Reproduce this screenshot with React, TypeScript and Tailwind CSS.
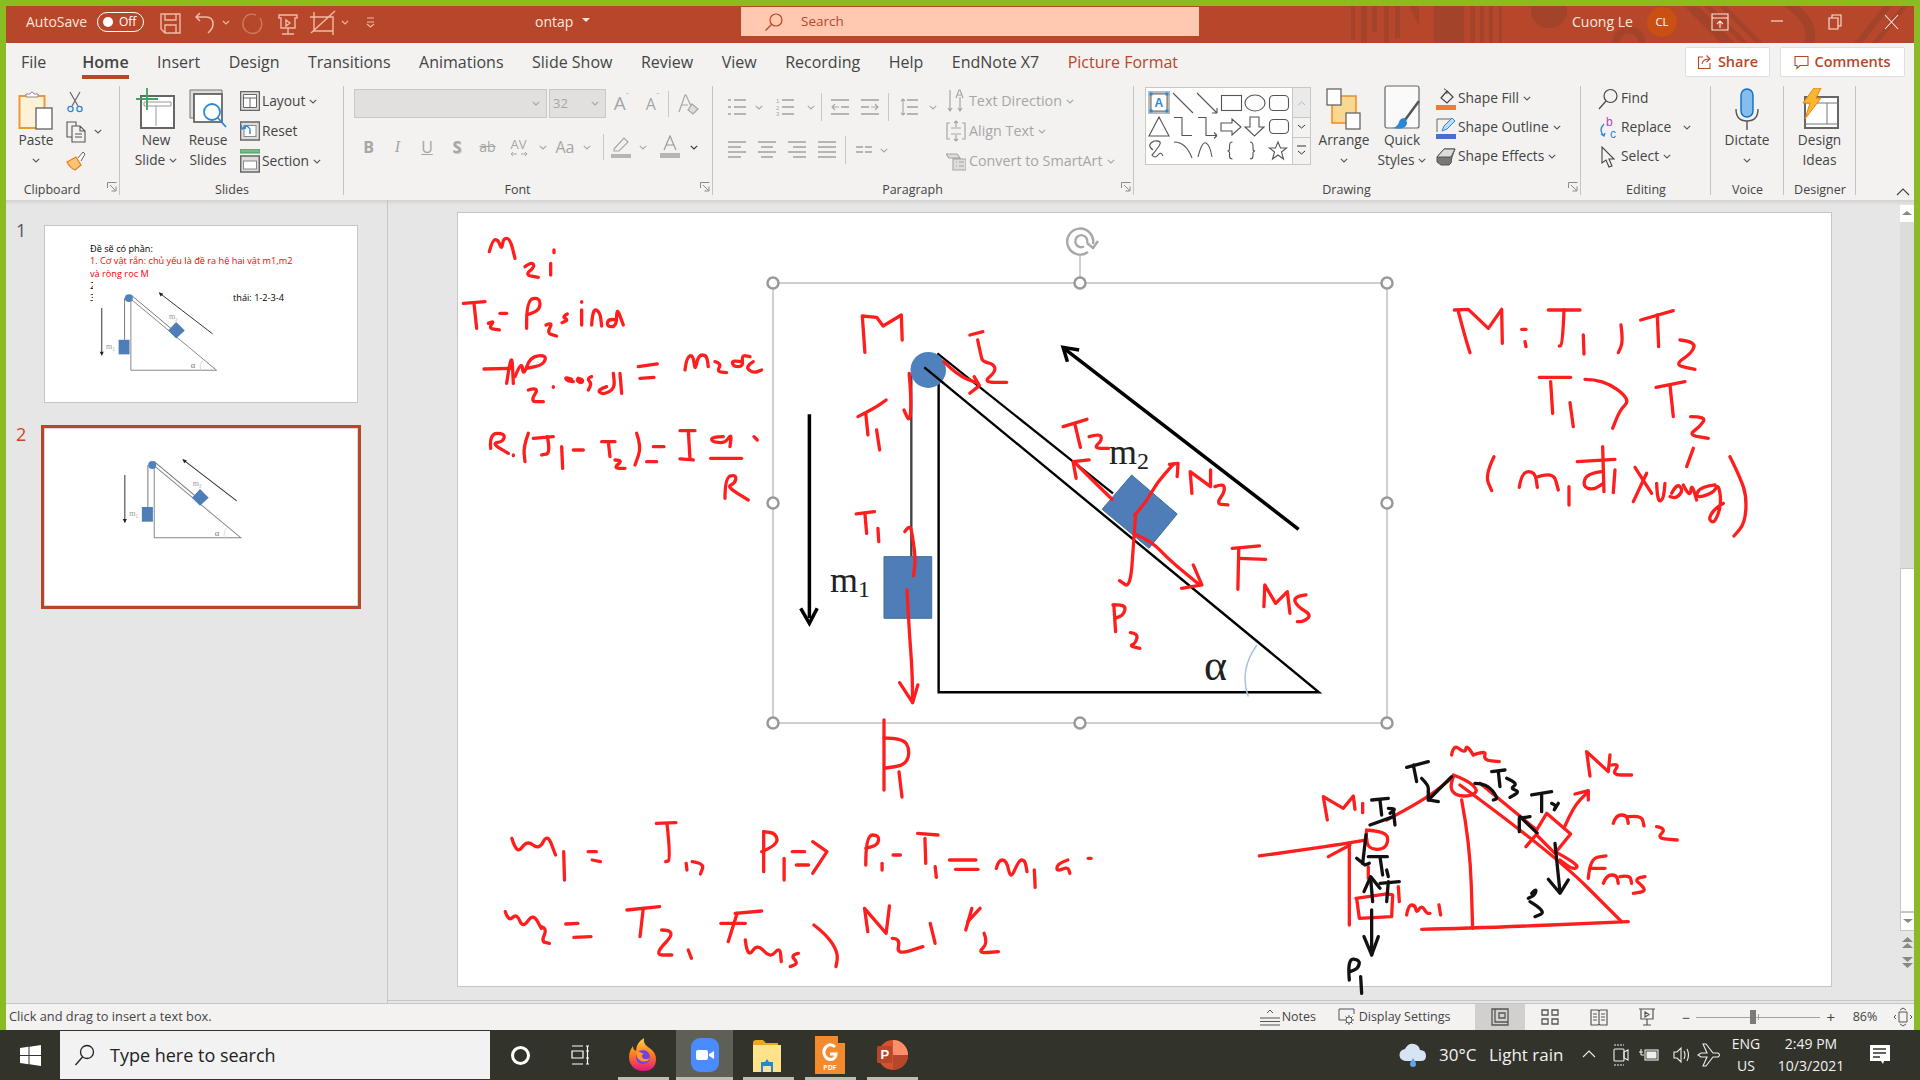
import React from "react";

const RED = "#ff1e1e";

function smooth(s: string) {
  const straight = s.startsWith("!");
  const p = s.replace("!", "").trim().split(/\s+/).map((a) => a.split(",").map(Number));
  if (straight || p.length < 3) return "M" + p.map((q) => q[0] + " " + q[1]).join(" L");
  let d = `M${p[0][0]} ${p[0][1]}`;
  for (let i = 1; i < p.length - 1; i++) {
    const mx = (p[i][0] + p[i + 1][0]) / 2;
    const my = (p[i][1] + p[i + 1][1]) / 2;
    d += ` Q${p[i][0]} ${p[i][1]} ${mx} ${my}`;
  }
  const l = p[p.length - 1];
  return d + ` L${l[0]} ${l[1]}`;
}

function Ink({ x = 0, y = 0, sx = 1, sy = 1, color = RED, w = 3.3, d }: { x?: number; y?: number; sx?: number; sy?: number; color?: string; w?: number; d: string[] }) {
  return (
    <g transform={`translate(${x} ${y}) scale(${sx} ${sy})`} fill="none" stroke={color} strokeWidth={w} strokeLinecap="round" strokeLinejoin="round">
      {d.map((s, i) => (
        <path key={i} d={smooth(s)} vectorEffect="non-scaling-stroke" />
      ))}
    </g>
  );
}

function Chev({ c = "#555", className = "" }: { c?: string; className?: string }) {
  return (
    <svg width="8" height="5" viewBox="0 0 8 5" fill="none" className={"shrink-0 " + className}>
      <path d="M.8.8 4 4l3.2-3.2" stroke={c} strokeWidth="1.1" />
    </svg>
  );
}

function Launcher() {
  return (
    <svg width="10" height="10" viewBox="0 0 10 10" fill="none" className="absolute right-[3px] bottom-[6px]">
      <path d="M.5 6V.5H9.5M3 3l5.5 5.5M4.5 9H9V4.5" stroke="#8a8a8a" />
    </svg>
  );
}

function Group({ w, label, launcher, children }: { w: string; label: string; launcher?: boolean; children: React.ReactNode }) {
  return (
    <div className={"relative shrink-0 h-[112px] flex flex-col " + w}>
      <div className="h-[95px] flex">{children}</div>
      <div className={"text-center text-[12.5px] leading-[17px] text-[#444] " + (launcher ? "pr-[22px]" : "")}>{label}</div>
      {launcher && <Launcher />}
      <div className="absolute right-0 top-0 bottom-[3px] w-px bg-[#c4c4c4]" />
    </div>
  );
}

function Big({ w, icon, l1, l2, chev }: { w: string; icon: React.ReactNode; l1: string; l2?: string; chev?: boolean }) {
  return (
    <div className={"flex flex-col items-center shrink-0 text-[13.7px] leading-[20px] text-[#444] whitespace-nowrap " + w}>
      <div className="h-[44px] flex items-end justify-center">{icon}</div>
      <div>{l1}</div>
      <div className="flex items-center gap-[4px] h-[20px]">
        {l2}
        {chev && <Chev />}
      </div>
    </div>
  );
}

function Small({ icon, text, chev, dis, h = "h-[30px]", iw = "w-[24px]" }: { icon: React.ReactNode; text: string; chev?: boolean; dis?: boolean; h?: string; iw?: string }) {
  return (
    <div className={"flex items-center whitespace-nowrap " + h + " " + (dis ? "text-[#a6a6a6] text-[14.3px]" : "text-[#444] text-[13.8px]")}>
      <div className={"flex justify-center shrink-0 " + iw}>{icon}</div>
      <span>{text}</span>
      {chev && <Chev c={dis ? "#a6a6a6" : "#555"} className="ml-[4px]" />}
    </div>
  );
}

function Lines({ rows, w = 18, c = "#a6a6a6", extra }: { rows: number[][]; w?: number; c?: string; extra?: React.ReactNode }) {
  return (
    <svg width={w} height="18" viewBox={`0 0 ${w} 18`} fill="none" stroke={c} strokeWidth="1.6">
      {rows.map((r, i) => (
        <path key={i} d={`M${r[0]} ${r[2]}H${r[1]}`} />
      ))}
      {extra}
    </svg>
  );
}

function MiniDiagram({ dx, dy }: { dx: number; dy: number }) {
  return (
    <svg viewBox="133 670 940 532" className="absolute inset-0 w-full h-full">
      <g transform={`translate(${dx} ${dy})`}>
        <path d="M463 778V998H722L457 778" fill="none" stroke="#888" strokeWidth="3" />
        <path d="M463 770L600 885M444 780V906" fill="none" stroke="#777" strokeWidth="3" />
        <circle cx="457" cy="780" r="12" fill="#4f81bd" />
        <rect x="426" y="906" width="33" height="44" fill="#4f7db8" />
        <path d="M600 852L626 878 600 902 576 878Z" fill="#4f7db8" />
        <path d="M375 810V950M710 888L550 765" stroke="#333" strokeWidth="3" fill="none" />
        <path d="M369 942L375 955 381 942ZM547 762L561 767 553 775Z" fill="#222" />
        <path d="M680 968Q668 985 674 1000" stroke="#bcd" strokeWidth="2" fill="none" />
        <text x="388" y="934" fontFamily="Liberation Serif" fontSize="24" fill="#999">m₁</text>
        <text x="578" y="844" fontFamily="Liberation Serif" fontSize="24" fill="#999">m₂</text>
        <text x="644" y="992" fontFamily="Liberation Serif" fontSize="26" fill="#777">α</text>
      </g>
    </svg>
  );
}

function Tray({ w, children }: { w: string; children: React.ReactNode }) {
  return <div className={"flex justify-center shrink-0 " + w}>{children}</div>;
}

export default function App() {
  return (
    <div className="w-[1920px] h-[1080px] overflow-hidden flex flex-col bg-[#32332a] [font-family:'Open_Sans','Noto_Sans',sans-serif]">
      <div className="h-[1030px] shrink-0 flex flex-col border-t-[6px] border-x-[6px] border-[#8abb22]">
        {/* TITLE BAR */}
        <div className="relative h-[37px] shrink-0 bg-[#b7472a] flex items-center pb-[6px] text-white overflow-hidden">
          <svg viewBox="1340 6 570 37" className="absolute right-0 top-0 w-[570px] h-[37px]">
            <g fill="#a3432a">
              <rect x="1347" y="6" width="4" height="34" />
              <rect x="1357" y="6" width="6" height="37" />
              <rect x="1368" y="6" width="5" height="26" />
              <rect x="1380" y="6" width="5" height="37" />
              <rect x="1391" y="6" width="5" height="32" />
              <path d="M1405 6h10v20zM1430 6h30v37h-30z" />
              <rect x="1466" y="6" width="5" height="37" />
              <rect x="1476" y="6" width="4" height="37" />
              <rect x="1485" y="6" width="4" height="37" />
              <rect x="1495" y="6" width="3" height="37" />
              <circle cx="1545" cy="10" r="18" />
              <circle cx="1625" cy="43" r="13" fill="none" stroke="#a3432a" strokeWidth="7" />
              <path d="M1680 6l37 37h14l-37-37zM1700 6l37 37h7l-37-37zM1715 6l37 37h7l-37-37z" />
              <path d="M1780 6q28 20 20 37h10q6-20-16-37zM1850 43l30-37h8l-30 37zM1868 43l30-37h6l-30 37z" />
            </g>
          </svg>
          <span className="ml-[20px] w-[71px] shrink-0 text-[14px] text-[#ffe6dc] whitespace-nowrap">AutoSave</span>
          <div className="relative w-[47px] shrink-0 h-[20px] rounded-full border border-white flex items-center pl-[5px] gap-[6px] text-[12px]">
            <span className="w-[10px] h-[10px] rounded-full bg-white" />
            <span>Off</span>
          </div>
          <svg width="232" height="26" viewBox="150 8 232 26" fill="none" stroke="#f3b9a4" strokeWidth="1.4" className="ml-[6px] shrink-0">
            <path d="M161 13h19v19h-15l-4-4zM165 13v6h11v-6M165 32v-8h11v8" />
            <path d="M200 20l-4-4 4-4M196 16h10q7 0 7 7 0 5-5 9" strokeWidth="1.5" />
            <path d="M223 20l3 3 3-3" strokeWidth="1.1" />
            <path d="M256 14q-8-3-12 4-3 7 2 12 7 5 13 0 5-6 1-13" stroke="#cf7a60" />
            <path d="M279 14h18v3h-2v10h-14V17h-2zM288 27v6M282 33h12M286 19l4 3-4 3z" />
            <path d="M314 11v19h19M320 16h-10M333 34V16h-13M311 32l24-22" />
            <path d="M342 20l3 3 3-3" strokeWidth="1.1" />
            <path d="M367 17h7M367 23l3.500 3 3.500-3M367 21h7" strokeWidth="1.1" />
          </svg>
          <span className="ml-[153px] shrink-0 text-[14px] text-[#ffe6dc] w-[47px]">ontap</span>
          <svg width="8" height="5" className="mt-[-2px] shrink-0"><path d="M0 0h8L4 4z" fill="#ffe6dc" /></svg>
          <div className="ml-[151px] shrink-0 w-[458px] h-[29px] bg-[#ffc8b0] flex items-center pl-[23px] text-[#b7472a] text-[13.5px]">
            <svg width="20" height="20" viewBox="0 0 20 20" fill="none" stroke="#b7472a" strokeWidth="1.2">
              <circle cx="12" cy="8" r="6" />
              <path d="M7.500 12.500L1.500 18.500" />
            </svg>
            <span className="ml-[17px]">Search</span>
          </div>
          <span className="ml-[373px] shrink-0 text-[14px] text-[#ffe6dc] relative w-[62px] whitespace-nowrap">Cuong Le</span>
          <div className="relative shrink-0 ml-[13px] w-[30px] h-[30px] rounded-full bg-[#ca4f12] flex items-center justify-center text-[11.5px]">CL</div>
          <svg width="200" height="20" viewBox="1710 12 200 20" fill="none" stroke="#ffe6dc" strokeWidth="1.1" className="relative ml-[33px] shrink-0">
            <path d="M1712 14h16v16h-16zM1712 18h16M1720 28v-7M1717 24l3-3 3 3" />
            <path d="M1771 21h12" />
            <path d="M1829 18h9v11h-9zM1832 18v-3h9v11h-3" />
            <path d="M1885 15l13 14M1898 15l-13 14" />
          </svg>
        </div>

        {/* TABS */}
        <div className="h-[36px] shrink-0 bg-[#f3f2f1] flex items-start pl-[15px] pr-[9px] text-[16px] text-[#444] gap-[28.5px] whitespace-nowrap">
          <div className="pt-[7px] mr-[7.500px]">File</div>
          <div className="h-[36px] pt-[7px] border-b-[4px] border-[#b7472a] font-semibold">Home</div>
          <div className="pt-[7px]">Insert</div>
          <div className="pt-[7px]">Design</div>
          <div className="pt-[7px]">Transitions</div>
          <div className="pt-[7px]">Animations</div>
          <div className="pt-[7px]">Slide Show</div>
          <div className="pt-[7px]">Review</div>
          <div className="pt-[7px]">View</div>
          <div className="pt-[7px]">Recording</div>
          <div className="pt-[7px]">Help</div>
          <div className="pt-[7px]">EndNote X7</div>
          <div className="pt-[7px] text-[#b7472a]">Picture Format</div>
          <div className="ml-auto flex gap-[10px] pt-[4px]">
            <div className="w-[85px] h-[30px] bg-white border border-[#e1dfdd] rounded-[2px] flex items-center justify-center gap-[5px] font-semibold text-[#b7472a] text-[14.5px]">
              <svg width="16" height="16" viewBox="0 0 16 16" fill="none" stroke="#b7472a" strokeWidth="1.1"><path d="M6 3H1.500v11.500H13V9M5 10q1-5 7-5M9.500 1.500L13 5 9.500 8" /></svg>
              Share
            </div>
            <div className="w-[125px] h-[30px] bg-white border border-[#e1dfdd] rounded-[2px] flex items-center justify-center gap-[5px] font-semibold text-[#b7472a] text-[14.5px]">
              <svg width="15" height="15" viewBox="0 0 15 15" fill="none" stroke="#b7472a" strokeWidth="1.1"><path d="M1 1.500h13v9H6l-3 3v-3H1z" /></svg>
              Comments
            </div>
          </div>
        </div>

        {/* RIBBON */}
        <div className="relative h-[121px] shrink-0 bg-[#f3f2f1] flex pt-[7px]">
          <Group w="w-[114px]" label="Clipboard" launcher>
            <Big
              w="w-[60px]"
              l1="Paste"
              icon={
                <svg width="36" height="41" viewBox="0 0 36 41" fill="none">
                  <rect x="1.500" y="7" width="25" height="32" fill="#fdf1d8" stroke="#ee9a32" strokeWidth="2" />
                  <path d="M8 8V5h4q2-4 4 0h4v3z" fill="#fff" stroke="#8a8a8a" />
                  <rect x="18" y="19" width="16" height="21" fill="#fff" stroke="#6b6b6b" strokeWidth="1.4" />
                </svg>
              }
              chev
            />
            <div className="flex flex-col pt-px">
              <div className="h-[30px] flex items-center pl-[1px]">
                <svg width="16" height="22" viewBox="0 0 16 22" fill="none">
                  <path d="M3 1l8 14M13 1L5 15" stroke="#666" strokeWidth="1.2" />
                  <circle cx="3.500" cy="18" r="2.600" stroke="#2b88d8" strokeWidth="1.3" />
                  <circle cx="12.500" cy="18" r="2.600" stroke="#2b88d8" strokeWidth="1.3" />
                </svg>
              </div>
              <div className="h-[29px] flex items-center gap-[8px]">
                <svg width="20" height="22" viewBox="0 0 20 22" fill="none" stroke="#555" strokeWidth="1.1">
                  <path d="M6 16H1V1h9v4" />
                  <path d="M6 5h8l5 5v11H6zM14 5v5h5M9 13h7M9 16h7" />
                </svg>
                <Chev />
              </div>
              <div className="h-[29px] flex items-center">
                <svg width="20" height="22" viewBox="0 0 20 22" fill="none">
                  <path d="M1 12l9-5 5 8-6 5q-5-2-8-8z" fill="#fbc577" stroke="#e8821e" strokeWidth="1.3" />
                  <path d="M12 8l5-6 2 2-4 7" fill="#fff" stroke="#666" />
                </svg>
              </div>
            </div>
          </Group>

          <Group w="w-[224px]" label="Slides">
            <Big
              w="w-[70px] ml-[1px]"
              l1="New"
              l2="Slide"
              chev
              icon={
                <svg width="40" height="42" viewBox="0 0 40 42" fill="none">
                  <rect x="5" y="8" width="33" height="32" stroke="#666" strokeWidth="2" fill="#fff" />
                  <path d="M8 14h27v4H8zM20 18v20" stroke="#999" fill="none" />
                  <path d="M11 0v22M0 11h22" stroke="#3da35d" strokeWidth="1.800" />
                </svg>
              }
            />
            <Big
              w="w-[50px] ml-[-8px] mr-[5px]"
              l1="Reuse"
              l2="Slides"
              icon={
                <svg width="40" height="42" viewBox="0 0 40 42" fill="none">
                  <path d="M2 30V2h32v4H6v24z" fill="#ddd" stroke="#777" />
                  <rect x="6" y="6" width="28" height="28" stroke="#666" strokeWidth="1.800" fill="#fff" />
                  <circle cx="24" cy="24" r="8" stroke="#2b88d8" strokeWidth="1.800" />
                  <path d="M30 30l8 9" stroke="#2b88d8" strokeWidth="1.800" />
                </svg>
              }
            />
            <div className="flex flex-col">
              <Small
                iw="w-[24px]"
                text="Layout"
                chev
                icon={
                  <svg width="20" height="20" viewBox="0 0 20 20" fill="#fff" stroke="#666">
                    <rect x=".5" y=".5" width="19" height="19" fill="#ddd" strokeWidth="1.5" />
                    <path d="M3.500 3.500h13v13h-13zM3.500 7h13M10 7v9.500" />
                  </svg>
                }
              />
              <Small
                iw="w-[24px]"
                text="Reset"
                icon={
                  <svg width="20" height="20" viewBox="0 0 20 20" fill="none">
                    <rect x=".5" y="1" width="19" height="18" fill="#ddd" stroke="#666" strokeWidth="1.5" />
                    <rect x="4" y="4.500" width="12" height="11" fill="#fff" stroke="#888" />
                    <path d="M3 7q4-4 7 1v5M1 4l1 4 4-1" stroke="#2b88d8" strokeWidth="1.400" />
                  </svg>
                }
              />
              <Small
                iw="w-[24px]"
                text="Section"
                chev
                icon={
                  <svg width="20" height="24" viewBox="0 0 20 24" fill="none">
                    <rect x="0" y="0" width="20" height="4" fill="#6ebd8a" stroke="#3da35d" />
                    <rect x=".7" y="7" width="18.600" height="16" fill="#ddd" stroke="#666" strokeWidth="1.500" />
                    <rect x="3.500" y="12" width="13" height="8" fill="#fff" stroke="#888" />
                  </svg>
                }
              />
            </div>
          </Group>

          <Group w="w-[369px]" label="Font" launcher>
            <div className="pl-[10px] flex flex-col">
              <div className="flex items-center h-[29px] mt-[3px]">
                <div className="w-[193px] h-[29px] bg-[#e1e0de] border border-[#c8c8c8] flex items-center justify-end pr-[6px]"><Chev c="#a6a6a6" /></div>
                <div className="ml-[2px] w-[57px] h-[29px] bg-[#e1e0de] border border-[#c8c8c8] flex items-center justify-between pl-[3px] pr-[6px] text-[13px] text-[#a6a6a6]">32<Chev c="#a6a6a6" /></div>
                <Tray w="w-[31px]">
                  <span className="text-[19px] leading-none text-[#a6a6a6]">A<sup className="text-[8px] align-[8px]">ˆ</sup></span>
                </Tray>
                <Tray w="w-[31px]">
                  <span className="text-[16px] leading-none text-[#a6a6a6]">A<sup className="text-[8px] align-[8px]">ˇ</sup></span>
                </Tray>
                <div className="w-px h-[26px] bg-[#c8c8c8]" />
                <Tray w="w-[38px]">
                  <svg width="22" height="22" viewBox="0 0 22 22" fill="none" stroke="#a6a6a6" strokeWidth="1.2">
                    <path d="M2 19L8 2h1l5 11M4 12h7" />
                    <path d="M15 11l6 5-5 5-5-4z" fill="#ddd" />
                  </svg>
                </Tray>
              </div>
              <div className="flex items-center h-[24px] mt-[17px] text-[#a6a6a6] text-[16px] leading-none">
                <Tray w="w-[29px]"><b>B</b></Tray>
                <Tray w="w-[29px]"><i className="[font-family:'Liberation_Serif',serif]">I</i></Tray>
                <Tray w="w-[30px]"><span className="underline">U</span></Tray>
                <Tray w="w-[30px]"><b className="[text-shadow:1px_1px_#ccc]">S</b></Tray>
                <Tray w="w-[31px]"><span className="line-through text-[14px]">ab</span></Tray>
                <Tray w="w-[31px]">
                  <span className="flex flex-col items-center text-[13px] leading-[13px]">AV<svg width="20" height="6" viewBox="0 0 20 6" fill="none" stroke="#a6a6a6"><path d="M2 3h6M2 3l2-2M2 3l2 2M12 3h6M18 3l-2-2M18 3l-2 2" /></svg></span>
                </Tray>
                <Tray w="w-[17px]"><Chev c="#a6a6a6" /></Tray>
                <Tray w="w-[28px]">Aa</Tray>
                <Tray w="w-[15px]"><Chev c="#a6a6a6" /></Tray>
                <div className="w-px h-[26px] ml-[9px] bg-[#c8c8c8]" />
                <Tray w="w-[34px]">
                  <svg width="22" height="24" viewBox="0 0 22 24" fill="none" stroke="#a6a6a6" strokeWidth="1.2">
                    <path d="M4 14L14 3l4 4-9 9H4z" />
                    <rect x="1" y="19" width="20" height="4" fill="#b5b5b3" stroke="none" />
                  </svg>
                </Tray>
                <Tray w="w-[10px]"><Chev c="#a6a6a6" /></Tray>
                <Tray w="w-[44px]">
                  <svg width="22" height="24" viewBox="0 0 22 24" fill="none" stroke="#999" strokeWidth="1.2">
                    <path d="M5 15L11 1l6 14M7 10h8" />
                    <rect x="1" y="18" width="20" height="5" fill="#b5b5b3" stroke="none" />
                  </svg>
                </Tray>
                <Tray w="w-[4px]"><Chev c="#333" /></Tray>
              </div>
            </div>
          </Group>

          <Group w="w-[421px]" label="Paragraph" launcher>
            <div className="flex flex-col w-[230px] shrink-0 pl-[14px]">
              <div className="flex items-center h-[24px] mt-[9px]">
                <Tray w="w-[20px]"><Lines rows={[[0, 3, 2], [6, 18, 2], [0, 3, 9], [6, 18, 9], [0, 3, 16], [6, 18, 16]]} /></Tray>
                <Tray w="w-[23px]"><Chev c="#a6a6a6" /></Tray>
                <Tray w="w-[30px]">
                  <Lines
                    rows={[[6, 18, 2], [6, 18, 9], [6, 18, 16]]}
                    extra={<g fill="#a6a6a6" stroke="none" fontSize="6" fontFamily="Liberation Sans"><text x="0" y="5">1</text><text x="0" y="12">2</text><text x="0" y="18">3</text></g>}
                  />
                </Tray>
                <Tray w="w-[21px]"><Chev c="#a6a6a6" /></Tray>
                <div className="w-px h-[28px] bg-[#c8c8c8] mr-[8px]" />
                <Tray w="w-[20px]">
                  <Lines rows={[[0, 18, 2], [10, 18, 9], [0, 18, 16]]} extra={<path d="M8 9H1M4 6L1 9l3 3" strokeWidth="1.1" />} />
                </Tray>
                <Tray w="w-[40px]">
                  <Lines rows={[[0, 18, 2], [0, 8, 9], [0, 18, 16]]} extra={<path d="M10 9h7M14 6l3 3-3 3" strokeWidth="1.1" />} />
                </Tray>
                <div className="w-px h-[28px] bg-[#c8c8c8] ml-[-2px]" />
                <Tray w="w-[40px]">
                  <Lines rows={[[7, 18, 2], [7, 18, 9], [7, 18, 16]]} extra={<path d="M3 1v16M1 3l2-2 2 2M1 15l2 2 2-2" strokeWidth="1.1" />} />
                </Tray>
                <Chev c="#a6a6a6" />
              </div>
              <div className="flex items-center h-[24px] mt-[19px]">
                <Tray w="w-[20px]"><Lines rows={[[0, 18, 1], [0, 13, 6], [0, 18, 11], [0, 13, 16]]} /></Tray>
                <Tray w="w-[40px]"><Lines rows={[[0, 18, 1], [3, 15, 6], [0, 18, 11], [3, 15, 16]]} /></Tray>
                <Tray w="w-[20px]"><Lines rows={[[0, 18, 1], [5, 18, 6], [0, 18, 11], [5, 18, 16]]} /></Tray>
                <Tray w="w-[40px]"><Lines rows={[[0, 18, 1], [0, 18, 6], [0, 18, 11], [0, 18, 16]]} /></Tray>
                <div className="w-px h-[28px] bg-[#c8c8c8] ml-[-2px] mr-[10px]" />
                <Lines w={16} rows={[[0, 7, 6], [9, 16, 6], [0, 7, 11], [9, 16, 11]]} />
                <Chev c="#a6a6a6" className="ml-[8px]" />
              </div>
            </div>
            <div className="flex flex-col">
              <Small
                dis
                iw="w-[26px]"
                text="Text Direction"
                chev
                icon={
                  <svg width="18" height="24" viewBox="0 0 18 24" fill="none" stroke="#a6a6a6" strokeWidth="1.2">
                    <path d="M3 1v21M1 19l2 3 2-3M13 8v14M11 19l2 3 2-3" />
                    <path d="M9 9l3-8h1l3 8M10 6h5" />
                  </svg>
                }
              />
              <Small
                dis
                iw="w-[26px]"
                text="Align Text"
                chev
                icon={
                  <svg width="20" height="22" viewBox="0 0 20 22" fill="none" stroke="#a6a6a6" strokeWidth="1.2">
                    <path d="M4 3H1v16h3M16 3h3v16h-3M5 8h10M5 14h10M10 1v6M10 15v6M8 3l2-2 2 2M8 19l2 2 2-2" />
                  </svg>
                }
              />
              <Small
                dis
                iw="w-[26px]"
                text="Convert to SmartArt"
                chev
                icon={
                  <svg width="20" height="20" viewBox="0 0 20 20" fill="none" stroke="#a6a6a6" strokeWidth="1.1">
                    <path d="M0 3h11l3 4H3zM7 8h13v11H7zM10 11h1M13 11h5M10 15h1M13 15h5" fill="#ddd" />
                  </svg>
                }
              />
            </div>
          </Group>

          <Group w="w-[447px]" label="Drawing" launcher>
            <svg width="166" height="78" viewBox="1145 88 166 78" fill="none" className="ml-[11px] mt-[1px] shrink-0">
              <rect x="1145.500" y="88.500" width="147" height="77" fill="#fff" stroke="#c8c8c8" />
              <rect x="1148" y="92" width="22" height="23" fill="#bbb" />
              <rect x="1151" y="95" width="16" height="17" fill="#fff" stroke="#666" />
              <text x="1154.500" y="108" fill="#2b88d8" fontSize="12" fontWeight="700" fontFamily="Liberation Sans">A</text>
              <g fill="#2b88d8"><rect x="1149.500" y="93.500" width="3" height="3" /><rect x="1165.500" y="93.500" width="3" height="3" /><rect x="1149.500" y="110.500" width="3" height="3" /><rect x="1165.500" y="110.500" width="3" height="3" /></g>
              <g stroke="#555" strokeWidth="1.1">
                <path d="M1173 94l20 20M1197 94l20 20M1217 114v-5M1217 114h-5" />
                <rect x="1221.500" y="96.500" width="20" height="15" />
                <ellipse cx="1255" cy="104" rx="10" ry="8" />
                <rect x="1269.500" y="96.500" width="19" height="15" rx="4" />
                <path d="M1159 118l10 19h-20zM1174 118.500h8v18h10M1198 118.500h8v18h11M1217 136.500l-3-3M1217 136.500l-3 3" />
                <path d="M1221 124h11v-4l9 8-9 8v-4h-11zM1250 118h9v10h5l-9.500 9-9.500-9h5z" />
                <rect x="1269.500" y="120.500" width="19" height="14" rx="4" />
                <path d="M1153 151q-7-5 1-9 9-1 5 5t-7 9q3 4 6 0t5 1M1174 143q12 0 18 16M1198 158q4-16 8-14t6 14M1232.500 143q-3 0-3 4v3q0 2-2 2 2 0 2 2v3q0 3 3 3M1250 143q3 0 3 4v3q0 2 2 2-2 0-2 2v3q0 3-3 3" />
                <path d="M1278 143l2.500 6h6l-5 4 2 7-5.500-4-5.500 4 2-7-5-4h6z" />
              </g>
              <g stroke="#c8c8c8">
                <rect x="1292.500" y="88.500" width="18" height="30" fill="#eaeaea" />
                <rect x="1292.500" y="118.500" width="18" height="20" fill="#f3f2f1" />
                <rect x="1292.500" y="138.500" width="18" height="27" fill="#f3f2f1" />
              </g>
              <path d="M1298 106l3.500-3 3.500 3" stroke="#bbb" />
              <path d="M1298 126l3.500 3 3.500-3" stroke="#333" />
              <path d="M1297 147h9M1298 152l3.500 3 3.500-3" stroke="#333" />
            </svg>
            <Big
              w="w-[64px] ml-[1px]"
              l1="Arrange"
              chev
              icon={
                <svg width="36" height="42" viewBox="0 0 36 42" fill="none">
                  <rect x="6" y="8" width="24" height="27" fill="#fbd892" stroke="#ee8c23" strokeWidth="1.500" />
                  <rect x="1" y="1" width="14" height="16" fill="#fff" stroke="#666" strokeWidth="1.300" />
                  <rect x="20" y="25" width="14" height="16" fill="#fff" stroke="#666" strokeWidth="1.300" />
                </svg>
              }
            />
            <Big
              w="w-[52px]"
              l1="Quick"
              l2="Styles"
              chev
              icon={
                <svg width="38" height="46" viewBox="0 0 38 46" fill="none">
                  <rect x="2" y="2" width="34" height="42" rx="2" fill="#fafafa" stroke="#666" strokeWidth="1.200" />
                  <path d="M36 17L22 36" stroke="#555" strokeWidth="2.500" />
                  <path d="M22 34q4 5 0 9-4 3-12 1 5-2 6-6 1-4 6-4z" fill="#2b88d8" />
                </svg>
              }
            />
            <div className="flex flex-col ml-[6px] mt-[-2px]">
              <Small
                h="h-[29px]"
                iw="w-[24px]"
                text="Shape Fill"
                chev
                icon={
                  <svg width="20" height="22" viewBox="0 0 20 22" fill="none">
                    <path d="M5 10l6-7 6 6-6 6z" stroke="#444" strokeWidth="1.200" />
                    <path d="M8 1q3 0 3 5" stroke="#444" />
                    <rect y="17" width="20" height="5" fill="#ed7d31" />
                  </svg>
                }
              />
              <Small
                h="h-[29px]"
                iw="w-[24px]"
                text="Shape Outline"
                chev
                icon={
                  <svg width="20" height="22" viewBox="0 0 20 22" fill="none">
                    <path d="M1 15V2h14" stroke="#666" />
                    <path d="M6 14l2-5 8-8 3 3-8 8z" fill="#bcdcf6" stroke="#2b88d8" />
                    <rect y="17" width="20" height="5" fill="#4472c4" />
                  </svg>
                }
              />
              <Small
                h="h-[29px]"
                iw="w-[24px]"
                text="Shape Effects"
                chev
                icon={
                  <svg width="20" height="18" viewBox="0 0 20 18" fill="none" stroke="#555">
                    <path d="M1 9l7-8h11l-3 8-1 6-2 2H5L1 14z" fill="#777" />
                    <path d="M1 9h14l4-8H8z" fill="#ddd" />
                  </svg>
                }
              />
            </div>
          </Group>

          <Group w="w-[130px]" label="Editing">
            <div className="flex flex-col pl-[14px] mt-[-2px]">
              <Small
                h="h-[29px]"
                text="Find"
                iw="w-[26px]"
                icon={
                  <svg width="20" height="22" viewBox="0 0 20 22" fill="none" stroke="#444" strokeWidth="1.200">
                    <circle cx="12.500" cy="8" r="6.500" />
                    <path d="M8 13l-7 8" />
                  </svg>
                }
              />
              <div className="flex items-center">
                <Small
                  h="h-[29px]"
                  text="Replace"
                  iw="w-[26px]"
                  icon={
                    <svg width="20" height="24" viewBox="0 0 20 24" fill="none">
                      <text x="8" y="10" fontSize="12" fill="#b146c2" fontFamily="Liberation Sans">b</text>
                      <text x="12" y="22" fontSize="12" fill="#2b88d8" fontFamily="Liberation Sans">c</text>
                      <path d="M6 8Q0 14 6 20M3 18l3 2 1-3" stroke="#2b88d8" strokeWidth="1.300" />
                    </svg>
                  }
                />
                <Chev className="ml-[12px]" />
              </div>
              <Small
                h="h-[29px]"
                text="Select"
                chev
                iw="w-[26px]"
                icon={
                  <svg width="16" height="22" viewBox="0 0 16 22" fill="none" stroke="#444" strokeWidth="1.100">
                    <path d="M2 1v16l4-3 3 7 3-1-3-7h5z" />
                  </svg>
                }
              />
            </div>
          </Group>

          <Group w="w-[73px]" label="Voice">
            <Big
              w="w-[72px]"
              l1="Dictate"
              chev
              icon={
                <svg width="24" height="42" viewBox="0 0 24 42" fill="none">
                  <rect x="6" y="1" width="12" height="28" rx="6" fill="#84bdee" stroke="#106ebe" strokeWidth="1.400" />
                  <path d="M1 21q0 12 11 12 11 0 11-12M12 33v9" stroke="#555" strokeWidth="1.400" />
                </svg>
              }
            />
          </Group>

          <Group w="w-[72px]" label="Designer">
            <Big
              w="w-[71px]"
              l1="Design"
              l2="Ideas"
              icon={
                <svg width="40" height="42" viewBox="0 0 40 42" fill="none">
                  <rect x="5" y="9" width="33" height="31" fill="#fff" stroke="#666" strokeWidth="2" />
                  <path d="M5 15h33M27 15v21M5 36h33" stroke="#777" />
                  <path d="M14 0h7l-5 10h5L5 31l5-16H3z" fill="#fdb72a" stroke="#e8821e" />
                </svg>
              }
            />
          </Group>

          <svg width="14" height="9" viewBox="0 0 14 9" fill="none" stroke="#444" strokeWidth="1.200" className="absolute right-[4px] bottom-[4px]">
            <path d="M1 8l6-6 6 6" />
          </svg>
        </div>

        {/* BODY */}
        <div className="relative flex-1 min-h-0 flex bg-[#e6e6e6]">
          <div className="absolute left-0 right-0 top-0 h-[5px] bg-gradient-to-b from-[#d2d2d2] to-[#e6e6e6]" />
          {/* thumbnails */}
          <div className="relative w-[382px] shrink-0 border-r border-[#c6c6c6] flex flex-col pt-[25px]">
            <div className="flex">
              <div className="w-[38px] pl-[10px] mt-[-6px] text-[18px] leading-[22px] text-[#555]">1</div>
              <div className="relative w-[314px] h-[178px] bg-white border border-[#c6c6c6] overflow-hidden text-[9.2px] leading-[12.3px] [font-family:'Open_Sans',sans-serif]">
                <MiniDiagram dx={-72} dy={108} />
                <div className="absolute left-[45px] top-[17px] whitespace-nowrap">
                  <div className="text-black">Đề sẽ có phần:</div>
                  <div className="text-[#ff0000]">1. Cơ vật rắn: chủ yếu là đề ra hệ hai vật m1,m2</div>
                  <div className="text-[#ff0000]">và ròng rọc M</div>
                  <div className="text-black w-[3px] overflow-hidden">2</div>
                  <div className="text-black w-[3px] overflow-hidden">3</div>
                </div>
                <div className="absolute left-[188px] top-[66px] text-black whitespace-nowrap">thái: 1-2-3-4</div>
              </div>
            </div>
            <div className="flex mt-[22px]">
              <div className="w-[35px] pl-[10px] mt-[-2px] text-[18px] leading-[22px] text-[#c8472a]">2</div>
              <div className="relative w-[320px] h-[184px] bg-white border-[3px] border-[#b7472a] outline outline-1 outline-offset-[-4px] outline-[#d8d8d8]">
                <MiniDiagram dx={0} dy={0} />
              </div>
            </div>
          </div>

          {/* slide area */}
          <div className="flex-1 min-w-0 flex flex-col">
            <div className="flex-1 min-h-0 flex">
              <div className="flex-1 min-w-0 pl-[70px] pt-[13px]">
                <div className="relative w-[1373px] h-[773px] bg-white shadow-[0_0_0_1px_#c6c6c6]">
                  <svg viewBox="458 213 1373 773" className="absolute inset-0 w-full h-full overflow-visible">
                    {/* picture */}
                    <g transform="translate(740 220) scale(0.4337 0.3333)" fill="none">
                      <path d="M458 450V1417H1335L425 442" stroke="#000" strokeWidth="2.400" vectorEffect="non-scaling-stroke" />
                      <path d="M455 400L860 820" stroke="#000" strokeWidth="2.200" vectorEffect="non-scaling-stroke" />
                      <path d="M395 460V1010" stroke="#444" strokeWidth="2.400" vectorEffect="non-scaling-stroke" />
                      <ellipse cx="434" cy="450" rx="41" ry="54" fill="#4f81bd" />
                      <path d="M425 442L470 490" stroke="#000" strokeWidth="2.400" vectorEffect="non-scaling-stroke" />
                      <rect x="332" y="1010" width="110" height="185" fill="#4f7db8" stroke="#41719c" vectorEffect="non-scaling-stroke" />
                      <path d="M903 765L1008 882 943 985 835 868Z" fill="#4f7db8" stroke="#41719c" vectorEffect="non-scaling-stroke" />
                      <path d="M160 583V1195" stroke="#000" strokeWidth="3.500" vectorEffect="non-scaling-stroke" />
                      <path d="M140 1165L160 1210 178 1165" stroke="#000" strokeWidth="3.500" vectorEffect="non-scaling-stroke" />
                      <path d="M1288 928L750 388" stroke="#000" strokeWidth="3.500" vectorEffect="non-scaling-stroke" />
                      <path d="M755 425L745 382 782 390" stroke="#000" strokeWidth="3.500" vectorEffect="non-scaling-stroke" />
                      <path d="M1192 1275Q1150 1350 1172 1430" stroke="#a6c2e0" strokeWidth="1.500" vectorEffect="non-scaling-stroke" />
                    </g>
                    <g fontFamily="Liberation Serif" fill="#222">
                      <text x="830" y="592" fontSize="36">m<tspan fontSize="24" dy="5">1</tspan></text>
                      <text x="1109" y="464" fontSize="36">m<tspan fontSize="24" dy="5">2</tspan></text>
                      <text x="1204" y="680" fontSize="44">α</text>
                    </g>
                    {/* selection */}
                    <rect x="773" y="283" width="614" height="440" fill="none" stroke="#a0a0a0" />
                    <path d="M1080 283V254" stroke="#a0a0a0" />
                    <g fill="#fff" stroke="#999" strokeWidth="2.500">
                      {[[773, 283], [1080, 283], [1387, 283], [773, 503], [1387, 503], [773, 723], [1080, 723], [1387, 723]].map((p, i) => (
                        <circle key={i} cx={p[0]} cy={p[1]} r="5.500" />
                      ))}
                    </g>
                    <g fill="none" stroke="#a8a8a8" strokeWidth="2.400" transform="translate(0 -2)">
                      <path d="M1093 246a13 13 0 1 0-5 8" />
                      <path d="M1087 245a6 6 0 1 0-3 3.500" />
                      <path d="M1087 245l6 5 5-7" />
                    </g>

                    {/* ink on picture */}
                    <Ink
                      x={740}
                      y={220}
                      sx={0.4337}
                      sy={0.3333}
                      d={[
                        "!288,397 282,288 315,292 330,318 372,285 374,360",
                        "530,345 560,335",
                        "548,360 556,410 560,425 585,432 590,455 560,487 615,487",
                        "470,425 500,465 548,490",
                        "!530,520 552,497 540,470",
                        "390,460 395,530 392,610 378,570",
                        "272,590 310,565 337,540",
                        "290,580 295,645",
                        "315,630 322,690",
                        "268,882 310,875",
                        "288,880 292,940",
                        "318,925 320,965",
                        "380,935 392,912 398,950 405,1020 400,1068",
                        "385,1110 390,1230 397,1350 398,1448",
                        "!368,1388 398,1448 410,1395",
                        "745,620 800,598",
                        "772,612 785,682",
                        "805,650 830,640 835,660 815,685 850,685",
                        "858,838 820,790 770,725",
                        "!775,775 768,725 805,720",
                        "910,885 935,850 960,790 1000,732",
                        "!990,733 1010,730 1008,770",
                        "912,885 908,960 900,1105 875,1082",
                        "915,945 950,965 990,1020 1060,1095",
                        "!1045,1035 1065,1095 1018,1105",
                        "!1042,820 1038,755 1085,800 1085,750",
                        "1095,800 1115,790 1118,815 1098,852 1125,855",
                        "1135,985 1198,978",
                        "1150,985 1148,1108",
                        "1150,1015 1212,1018",
                        "!1208,1160 1210,1095 1235,1150 1262,1115 1268,1180",
                        "1305,1125 1275,1130 1285,1160 1318,1185 1300,1205 1285,1205",
                        "860,1155 890,1152 885,1185 865,1195",
                        "862,1155 866,1235",
                        "900,1238 918,1240 912,1270 898,1278 922,1285",
                      ]}
                    />
                    <Ink
                      d={["884,720 884,790", "884,738 903,738 910,750 906,765 886,768", "899,772 902,797"]}
                    />

                    {/* top-left notes */}
                    <Ink
                      x={460}
                      y={220}
                      sx={0.3333}
                      sy={0.3333}
                      d={[
                        "88,95 98,58 115,60 125,90 130,55 150,55 165,115",
                        "195,140 215,125 225,140 195,165 235,172",
                        "272,165 272,130",
                        "282,90 282,98",
                        "10,250 75,245",
                        "42,250 50,325",
                        "85,310 105,300 85,325 118,330",
                        "120,280 140,280",
                        "200,325 198,240 240,232 240,270 200,285",
                        "258,315 280,305 260,340 290,348",
                        "322,282 306,290 325,300 306,308",
                        "365,315 365,270",
                        "365,245 365,247",
                        "395,315 398,265 420,275 425,318",
                        "470,300 445,295 440,320 470,320 470,260 490,315",
                        "72,447 150,445",
                        "140,490 155,385 160,490",
                        "165,470 185,420 190,470 210,410 260,405 250,435 200,445",
                        "205,510 240,500 210,545 250,545",
                        "280,500 280,502",
                        "335,478 315,470 320,482 340,485",
                        "355,475 370,478 365,490 350,482 355,475",
                        "395,470 380,475 395,490 385,510",
                        "440,500 410,510 430,525 465,505 460,460",
                        "480,460 485,520",
                        "535,440 592,432",
                        "540,475 582,472",
                        "675,450 680,410 700,405 705,455 715,405 740,405 745,440",
                        "765,425 785,430 770,455 800,458",
                        "845,425 815,420 820,440 850,440 845,405 870,410",
                        "880,425 855,440 880,460 905,450",
                        "92,685 88,640 135,640 130,665 95,670 145,700",
                        "160,705 160,707",
                        "205,640 190,680 195,725",
                        "220,655 280,650",
                        "262,650 272,700 245,705",
                        "305,680 308,745",
                        "340,690 370,690",
                        "425,665 465,665",
                        "445,665 450,710",
                        "465,720 490,720 460,745 495,745",
                        "530,640 545,680 525,735",
                        "580,680 612,680",
                        "560,725 590,725",
                        "660,632 705,632",
                        "685,632 690,715",
                        "660,717 700,720",
                        "790,650 755,650 755,665 795,670 815,640 810,680",
                        "752,715 845,715",
                        "795,835 795,770 830,765 825,790 800,800 865,840",
                        "882,650 892,660",
                      ]}
                    />

                    {/* top-right notes */}
                    <Ink
                      x={1420}
                      y={270}
                      sx={0.3333}
                      sy={0.3333}
                      d={[
                        "!103,120 145,118 205,175 245,118 247,220",
                        "115,125 135,200 150,248",
                        "305,178 318,178",
                        "315,215 318,230",
                        "385,120 480,120",
                        "432,120 428,225 418,228",
                        "490,195 492,252",
                        "603,165 610,215 595,248",
                        "662,150 760,122",
                        "712,135 716,230",
                        "780,210 828,215 815,250 762,285 825,298",
                        "358,322 452,322",
                        "392,335 398,430",
                        "450,398 460,470",
                        "495,328 550,328 632,388 600,420 578,475",
                        "708,352 795,335",
                        "750,345 760,440",
                        "812,440 860,440 840,470 805,495 865,505",
                        "222,560 195,615 215,662",
                        "298,652 305,605 345,605 352,652",
                        "355,620 400,605 415,660",
                        "447,650 447,705",
                        "545,605 500,610 488,650 520,660 550,640",
                        "548,530 552,665",
                        "472,575 585,568",
                        "580,668 585,600",
                        "645,592 695,670",
                        "680,610 640,695",
                        "710,640 712,695 730,690 735,640",
                        "755,670 770,640 790,660 770,685 750,680",
                        "800,590 820,535",
                        "790,645 810,685 815,640 830,690",
                        "885,645 840,650 825,685 880,670 895,640 905,700 885,760 865,750 880,720 910,700",
                        "930,560 960,620 980,680 975,760 942,798",
                      ]}
                    />

                    {/* bottom notes */}
                    <Ink
                      x={480}
                      y={780}
                      sx={0.4082}
                      sy={0.3333}
                      d={[
                        "78,175 90,225 115,180 145,210 165,160 185,225",
                        "205,215 207,300",
                        "265,215 285,215",
                        "275,240 295,245",
                        "432,130 480,128",
                        "458,130 468,240 455,245",
                        "505,250 507,270",
                        "520,245 550,250 540,282",
                        "695,155 695,275",
                        "690,215 730,195 725,160 695,155",
                        "745,235 745,300",
                        "765,215 795,215",
                        "775,255 805,255",
                        "!815,185 850,215 815,280",
                        "945,255 945,165 978,165 975,195 945,205",
                        "985,250 985,270",
                        "1012,225 1030,225",
                        "1072,160 1122,165",
                        "1090,175 1092,250",
                        "1115,260 1118,292",
                        "1150,240 1215,240",
                        "1165,268 1220,268",
                        "1265,265 1270,240 1290,240 1300,300 1320,240 1335,240 1340,275",
                        "1358,270 1360,322",
                        "1440,240 1415,250 1412,275 1440,260 1445,280",
                        "1490,235 1497,235",
                        "62,395 70,425 90,400 105,445 130,400 150,445",
                        "150,440 165,445 150,485 170,490",
                        "210,432 240,430",
                        "230,472 272,470",
                        "360,390 440,380",
                        "400,385 392,470",
                        "445,450 485,450 425,525 470,525",
                        "510,510 518,535",
                        "625,400 690,393",
                        "590,430 650,430",
                        "630,400 608,485",
                        "650,480 655,535 680,490 710,535 735,500 738,545",
                        "780,520 760,525 780,550 760,560",
                        "818,435 850,465 878,520 872,560",
                        "!950,455 942,385 995,460 1003,378",
                        "1010,475 1030,475 1020,525 1085,500",
                        "1103,430 1115,490",
                        "1205,385 1190,450",
                        "1195,425 1225,385",
                        "1235,460 1245,490 1218,520 1270,515",
                      ]}
                    />

                    {/* bottom-right diagram: red */}
                    <Ink
                      x={1240}
                      y={720}
                      sx={0.3333}
                      sy={0.3333}
                      d={[
                        "58,408 200,388 310,372 380,360",
                        "265,410 330,375",
                        "328,375 328,615",
                        "380,330 440,335 445,370 425,390 385,385 378,350 380,330",
                        "440,300 555,240 640,170",
                        "!262,300 250,230 310,265 340,228 345,268",
                        "368,250 368,278",
                        "635,105 640,72 675,100 680,75 700,105",
                        "700,105 740,90 730,120 778,125",
                        "640,165 680,180 715,210 695,228 650,228 630,205 640,170",
                        "660,195 940,400 1145,605",
                        "665,240 690,370 698,625",
                        "545,628 700,625 1165,605",
                        "720,190 890,330",
                        "!890,330 920,280 992,342 945,400 890,345",
                        "858,380 892,340",
                        "975,318 1000,260 1045,215",
                        "!1005,222 1045,212 1045,240",
                        "!1050,168 1040,95 1105,155 1110,105",
                        "1115,135 1140,130 1115,165 1175,165",
                        "1120,310 1128,285 1160,285 1165,310",
                        "1165,290 1205,285 1212,318",
                        "1250,320 1280,325 1250,355 1312,360",
                        "1045,475 1050,415 1098,408",
                        "1050,445 1095,445",
                        "1090,490 1100,465 1130,465 1135,490",
                        "1140,470 1170,465 1175,490",
                        "1215,470 1180,475 1210,500 1215,515 1180,520",
                        "945,395 1020,435 1000,450 960,420",
                        "500,585 505,555 525,555 530,580 545,555 560,580 570,580",
                        "597,555 602,585",
                        "475,500 478,545",
                        "!348,535 440,522 458,525 455,590 358,595 350,535",
                        "385,440 385,475",
                      ]}
                    />
                    <Ink
                      x={1240}
                      y={720}
                      sx={0.3333}
                      sy={0.3333}
                      color="#111"
                      d={[
                        "500,142 565,125",
                        "520,135 530,185",
                        "545,175 565,195 565,215",
                        "635,170 565,240",
                        "!565,215 565,240 595,245",
                        "395,240 445,235",
                        "420,240 425,285",
                        "445,265 470,265 450,280",
                        "390,315 460,290",
                        "460,270 465,315",
                        "378,345 368,430",
                        "!350,415 375,435 388,430",
                        "385,410 442,410",
                        "420,410 428,465",
                        "440,450 445,470",
                        "398,545 392,475",
                        "!372,515 392,470 420,505",
                        "420,490 478,485",
                        "445,485 440,545",
                        "395,570 395,705",
                        "!372,650 395,705 415,650",
                        "328,780 322,715 360,720 355,745 330,755",
                        "362,770 365,820",
                        "705,190 740,190 775,235 760,240",
                        "755,155 795,150",
                        "775,155 780,200",
                        "800,175 835,190 810,205 840,215 810,232",
                        "875,225 935,215",
                        "905,225 905,275",
                        "935,250 950,255 940,275 955,250",
                        "890,338 840,290",
                        "!838,335 838,295 870,290",
                        "945,370 960,515",
                        "!925,478 960,520 985,480",
                        "875,520 890,505 885,525 865,535",
                        "870,545 920,575 885,590",
                      ]}
                    />
                  </svg>
                </div>
              </div>
              {/* scrollbar */}
              <div className="w-[14px] shrink-0 flex flex-col mt-[3px]">
                <div className="h-[19px] bg-white flex items-center justify-center">
                  <svg width="10" height="5"><path d="M0 5l5-4 5 4z" fill="#888" /></svg>
                </div>
                <div className="h-[346px] bg-[#dcdcdc]" />
                <div className="h-[344px] bg-white border border-[#c6c6c6] border-r-0" />
                <div className="h-[19px] bg-white border border-[#c6c6c6] border-r-0 flex items-center justify-center">
                  <svg width="10" height="5"><path d="M0 0l5 4 5-4z" fill="#888" /></svg>
                </div>
                <div className="mt-[6px] flex justify-center">
                  <svg width="11" height="11" viewBox="0 0 11 11" fill="#888"><path d="M0 5l5.500-5L11 5zM0 11l5.500-5L11 11z" /></svg>
                </div>
                <div className="mt-[9px] flex justify-center">
                  <svg width="11" height="11" viewBox="0 0 11 11" fill="#888"><path d="M0 0l5.500 5L11 0zM0 6l5.500 5L11 6z" /></svg>
                </div>
              </div>
            </div>
            <div className="h-[3px] border-t border-[#c6c6c6] bg-[#e6e6e6]" />
          </div>
        </div>

        {/* STATUS BAR */}
        <div className="h-[27px] shrink-0 bg-[#f3f2f1] border-t border-[#c6c6c6] flex items-center text-[12.5px] text-[#444] whitespace-nowrap">
          <span className="ml-[3px] text-[12.8px]">Click and drag to insert a text box.</span>
          <svg width="20" height="18" viewBox="0 0 20 18" fill="none" stroke="#555" className="ml-[1048px] shrink-0">
            <path d="M0 10h20M0 13.500h20M0 17h20M7 5l3-3 3 3" />
          </svg>
          <span className="ml-[2px] w-[56px]">Notes</span>
          <svg width="18" height="18" viewBox="0 0 18 18" fill="none" stroke="#555" className="shrink-0">
            <path d="M6 12H1V1h15v5" />
            <circle cx="11" cy="12" r="3" />
            <path d="M11 7v2M11 15v2M6 12h2M14 12h2M7.500 8.500l1.500 1.500M13 14l1.500 1.500M7.500 15.500l1.500-1.500M13 10l1.500-1.500" />
          </svg>
          <span className="ml-[3px] w-[116px] whitespace-nowrap">Display Settings</span>
          <div className="h-[26px] w-[50px] bg-[#d2d0ce] flex items-center justify-center">
            <svg width="18" height="18" viewBox="0 0 18 18" fill="none" stroke="#555" strokeWidth="1.300"><path d="M1 1h16v16H1zM4 1v13h13M8 5h6v5H8z" /></svg>
          </div>
          <div className="w-[50px] flex justify-center">
            <svg width="18" height="18" viewBox="0 0 18 18" fill="none" stroke="#555" strokeWidth="1.300"><path d="M1 2h6v5H1zM11 2h6v5h-6zM1 11h6v5H1zM11 11h6v5h-6z" /></svg>
          </div>
          <div className="w-[48px] flex justify-center">
            <svg width="18" height="18" viewBox="0 0 18 18" fill="none" stroke="#555" strokeWidth="1.200"><path d="M1 2h7l1 1 1-1h7v15h-7l-1-1-1 1H1zM9 3v13M3 6h4M3 9h4M3 12h4M11 6h4M11 9h4M11 12h4" /></svg>
          </div>
          <div className="w-[49px] flex justify-center">
            <svg width="18" height="18" viewBox="0 0 18 18" fill="none" stroke="#555" strokeWidth="1.200"><path d="M1 1h16M3 1v10h12V1M9 11v6M5 17h8M7 4l4 2.500L7 9z" /></svg>
          </div>
          <div className="w-[17px] ml-[6px] text-center text-[14px]">−</div>
          <div className="relative w-[124px] h-[14px] ml-[1px] flex items-center">
            <div className="w-full h-px bg-[#a0a0a0]" />
            <div className="absolute left-[54px] top-0 w-[6px] h-[14px] bg-[#7a7a7a]" />
            <div className="absolute left-[62px] top-[4px] w-px h-[6px] bg-[#a0a0a0]" />
          </div>
          <div className="w-[22px] text-center text-[15px]">+</div>
          <span className="ml-[11px] w-[34px]">86%</span>
          <svg width="20" height="20" viewBox="0 0 20 20" fill="none" stroke="#555" className="ml-[6px] shrink-0">
            <path d="M6 5h8v10H6zM7 3l3-2 3 2M7 17l3 2 3-2M3 8l-2 2 2 2M17 8l2 2-2 2" />
          </svg>
        </div>
      </div>

      {/* TASKBAR */}
      <div className="relative h-[50px] shrink-0 flex items-center bg-[#32332a] text-white">
        <div className="w-[60px] flex justify-center">
          <svg width="21" height="21" viewBox="0 0 21 21" fill="#fff"><path d="M0 3l8.500-1.200V10H0zM9.500 1.700L21 0v10H9.500zM0 11h8.500v8.200L0 18zM9.500 11H21v10L9.500 19.300z" /></svg>
        </div>
        <div className="w-[430px] h-[48px] bg-[#f2f2f2] flex items-center text-[#222] text-[18px]">
          <svg width="22" height="22" viewBox="0 0 22 22" fill="none" stroke="#222" strokeWidth="1.300" className="ml-[14px]">
            <circle cx="13" cy="8" r="6.500" />
            <path d="M8.500 13l-7 8" />
          </svg>
          <span className="ml-[14px]">Type here to search</span>
        </div>
        <div className="w-[60px] flex justify-center">
          <div className="w-[19px] h-[19px] rounded-full border-[3px] border-white" />
        </div>
        <div className="w-[60px] flex justify-center">
          <svg width="20" height="20" viewBox="0 0 20 20" fill="none" stroke="#fff" strokeWidth="1.200">
            <path d="M2 1h11M16 1h3M2 6h11v7H2zM16 6h3M16 13h3M2 19h11M16 19h3M17.500 1v18" />
          </svg>
        </div>
        <div className="relative w-[66px] h-[50px] flex items-center justify-center">
          <svg width="30" height="34" viewBox="0 0 30 34">
            <defs>
              <linearGradient id="ffg" x1="0" y1="0" x2="0" y2="1"><stop offset="0" stopColor="#ffd24a" /><stop offset=".5" stopColor="#ff7a1e" /><stop offset="1" stopColor="#e31587" /></linearGradient>
            </defs>
            <path d="M15 33C6 33 1 26 1 19 1 14 3 11 5 8q0 4 3 5 0-8 8-13-1 6 4 9 8 5 8 12 0 12-13 12z" fill="url(#ffg)" />
            <circle cx="15" cy="19" r="7" fill="#7542e5" />
            <path d="M9 13q-2 7 4 10 6 2 9-3-6 3-8-1-1-2 2-3-4-2-7-3z" fill="#ff9a26" />
          </svg>
          <div className="absolute bottom-0 left-[8px] right-[7px] h-[3px] bg-[#bdbdb6]" />
        </div>
        <div className="relative w-[57px] h-[50px] bg-[#5e5f57] flex items-center justify-center">
          <svg width="28" height="34" viewBox="0 0 28 34">
            <rect width="28" height="34" rx="9" fill="#4a8cff" />
            <rect x="5" y="12" width="12" height="10" rx="2" fill="#fff" />
            <path d="M18 16l5-3v8l-5-3z" fill="#fff" />
          </svg>
          <div className="absolute bottom-0 left-0 right-0 h-[3px] bg-[#bdbdb6]" />
        </div>
        <div className="relative w-[62px] h-[50px] flex items-center justify-center ml-[3px]">
          <svg width="28" height="34" viewBox="0 0 28 34">
            <path d="M0 5q0-3 3-3h7l3 3h12v24H0z" fill="#e9a820" />
            <rect y="7" width="28" height="27" fill="#ffe38a" />
            <path d="M8 34V24h4l2-3 2 3h4v10z" fill="#1d89d8" />
            <rect x="10" y="28" width="8" height="6" fill="#ffe38a" />
          </svg>
          <div className="absolute bottom-0 left-[7px] right-[4px] h-[3px] bg-[#bdbdb6]" />
        </div>
        <div className="relative w-[62px] h-[50px] flex items-center justify-center ml-[1px]">
          <div className="relative w-[30px] h-[38px] bg-[#f38b2e] flex flex-col items-center justify-end pb-[1px] text-[7px] font-bold text-white">
            <svg width="20" height="22" viewBox="0 0 20 22" fill="none" className="absolute top-[6px]"><path d="M15 5q-4-4-8-1-5 4-2 10 3 5 8 3 3-2 3-5h-6" stroke="#fff" strokeWidth="3" /></svg>
            PDF
            <div className="absolute right-0 top-0 w-[7px] h-[7px] bg-[#32332a]" />
          </div>
          <div className="absolute bottom-0 left-[6px] right-[5px] h-[3px] bg-[#bdbdb6]" />
        </div>
        <div className="relative w-[62px] h-[50px] flex items-center justify-center">
          <svg width="32" height="34" viewBox="0 0 32 34">
            <circle cx="17" cy="17" r="15" fill="#d35230" />
            <path d="M17 2a15 15 0 0 1 15 15H17z" fill="#ff8f6b" />
            <path d="M17 17h15a15 15 0 0 1-15 15z" fill="#b7472a" />
            <rect x="1" y="8" width="15" height="17" rx="1.500" fill="#b7472a" />
            <text x="4.500" y="21" fontSize="13" fontWeight="700" fill="#fff" fontFamily="Liberation Sans">P</text>
          </svg>
          <div className="absolute bottom-0 left-[6px] right-[5px] h-[3px] bg-[#bdbdb6]" />
        </div>
        <div className="ml-[473px] w-[34px] flex justify-center">
          <svg width="28" height="24" viewBox="0 0 28 24">
            <path d="M7 18a6 6 0 0 1-1-12q3-6 9-5 5 1 6 6 6 0 6 6 0 5-5 5z" fill="#d6e4f4" />
            <path d="M14 15q3 4 3 6a3 3 0 1 1-6 0q0-2 3-6z" fill="#5ba7e8" />
          </svg>
        </div>
        <span className="ml-[9px] w-[42px] text-[17px] text-[#f2f2f2] whitespace-nowrap">30°C</span>
        <span className="ml-[8px] w-[74px] text-[17px] text-[#f2f2f2] whitespace-nowrap">Light rain</span>
        <svg width="160" height="26" viewBox="1570 1043 160 26" fill="none" stroke="#eee" strokeWidth="1.100" className="ml-[6px] shrink-0">
          <path d="M1584 1058l6-6 6 6" />
          <path d="M1615 1046h10M1615 1066h10" strokeDasharray="2 1" />
          <rect x="1615" y="1050" width="10" height="12" rx="1" />
          <path d="M1625 1053l4-2v10l-4-2z" />
          <path d="M1640 1053h4M1642 1050v6M1642 1056h3" />
          <rect x="1646" y="1051" width="13" height="10" />
          <rect x="1648" y="1053" width="9" height="6" fill="#eee" />
          <path d="M1675 1053h3l4-4v14l-4-4h-3zM1685 1052q2 4 0 8M1688 1050q3 6 0 12" />
          <path d="M1699 1056l3-2h6l-4-9h3l7 9h5q3 2 0 4h-5l-7 9h-3l4-9h-6z" />
        </svg>
        <div className="flex flex-col items-center w-[30px] ml-[2px] text-[14px] leading-[22px] text-[#f2f2f2]">
          <span>ENG</span>
          <span>US</span>
        </div>
        <div className="flex flex-col items-center w-[80px] ml-[10px] text-[14px] leading-[22px] text-[#f2f2f2]">
          <span>2:49 PM</span>
          <span>10/3/2021</span>
        </div>
        <div className="ml-[9px] w-[40px] flex justify-center">
          <svg width="24" height="24" viewBox="0 0 24 24">
            <path d="M2 2h20v16l-6 0-1 3-2-3H2z" fill="#fff" />
            <path d="M5 6h13M5 10h13M5 14h7" stroke="#32332a" strokeWidth="1.300" />
          </svg>
        </div>
      </div>
    </div>
  );
}
